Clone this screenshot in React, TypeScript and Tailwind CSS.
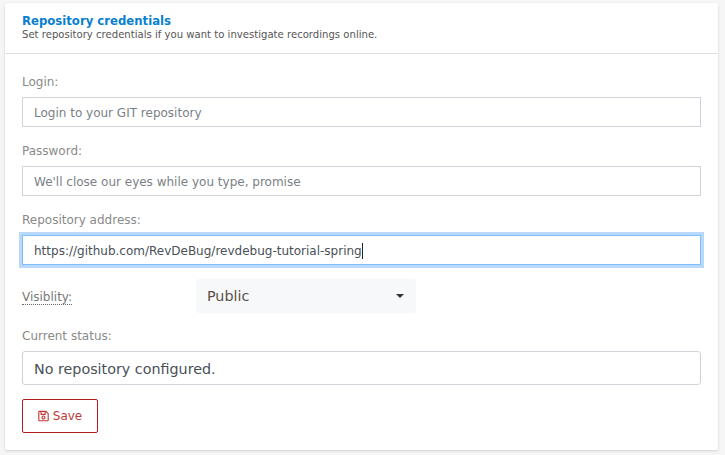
import { FaRegSave } from "react-icons/fa";

const font = "font-['DejaVu_Sans',sans-serif]";

const Field = ({ label, children }: { label: string; children: React.ReactNode }) => (
  <div>
    <div className="text-[12px] leading-[18px] text-[#8a8a8a] mb-[6px]">{label}</div>
    {children}
  </div>
);

const App = () => {
  return (
    <div className={`${font} h-[455px] w-[725px] overflow-hidden bg-[#f6f6f6] pt-[3px] pl-[5px]`}>
      <div className="w-[713px] h-[447px] bg-white rounded-[2px] shadow-[0_1px_3px_rgba(0,0,0,0.15)]">
        {/* Header */}
        <div className="h-[51px] border-b border-[#dcdfe3] pl-[17px] pt-[11px]">
          <h1 className="text-[11.7px] leading-[14px] font-bold text-[#0a7fd0]">Repository credentials</h1>
          <p className="text-[10.1px] leading-[13px] text-[#555]">
            Set repository credentials if you want to investigate recordings online.
          </p>
        </div>

        <div className="px-[17px] pt-[19px]">
          <Field label="Login:">
            <input
              className="block w-[679px] h-[30px] border border-[#ced4da] px-[11px] pt-[2px] text-[12px] text-[#495057] placeholder:text-[#7a7f85] outline-none"
              placeholder="Login to your GIT repository"
            />
          </Field>

          <div className="mt-[15px]">
            <Field label="Password:">
              <input
                className="block w-[679px] h-[30px] border border-[#ced4da] px-[11px] pt-[2px] text-[12px] text-[#495057] placeholder:text-[#7a7f85] outline-none"
                placeholder="We'll close our eyes while you type, promise"
              />
            </Field>
          </div>

          <div className="mt-[15px]">
            <Field label="Repository address:">
              <div className="flex items-center w-[679px] h-[30px] border border-[#80bdff] shadow-[0_0_0_3px_#b9d9fb] px-[11px] pt-[2px] text-[12px] text-[#495057]">
                <span className="border-r border-[#222] leading-[16px]">https://github.com/RevDeBug/revdebug-tutorial-spring</span>
              </div>
            </Field>
          </div>

          {/* Visibility */}
          <div className="flex items-center mt-[14px] h-[34px]">
            <div className="w-[174px]">
              <span className="text-[12px] leading-[14px] text-[#777] border-b border-dotted border-[#666] inline-block">Visiblity:</span>
            </div>
            <div className="flex items-center justify-between w-[220px] h-[34px] bg-[#f7f8f9] rounded-[3px] pl-[11px] pr-[12px] text-[14.3px] text-[#5a5148]">
              <span className="pt-[2px]">Public</span>
              <svg width="8" height="4" viewBox="0 0 8 4"><path d="M0 0h8L4 4z" fill="#333" /></svg>
            </div>
          </div>

          <div className="mt-[14px]">
            <Field label="Current status:">
              <div className="flex items-center w-[679px] h-[34px] border border-[#ced4da] rounded-[3px] px-[11px] pt-[4px] text-[14.3px] text-[#495057]">
                No repository configured.
              </div>
            </Field>
          </div>

          <button className="flex items-center justify-center gap-[4px] mt-[14px] w-[76px] h-[34px] border border-[#b01c1c] rounded-[2px] text-[12px] text-[#c23a3a]">
            <FaRegSave className="w-[11px] h-[12px]" />
            Save
          </button>
        </div>
      </div>
    </div>
  );
};

export default App;
